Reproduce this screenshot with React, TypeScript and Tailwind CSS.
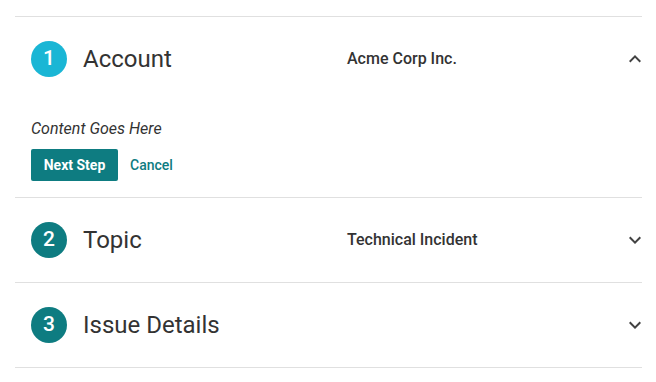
import React from "react";

const font = { fontFamily: "Roboto, 'Noto Sans', Arial, sans-serif" };

function Chevron({ up }: { up?: boolean }) {
  return (
    <svg width="24" height="24" viewBox="0 0 24 24" className="text-[#424242]">
      {up ? (
        <path fill="currentColor" d="M12 8l-6 6 1.41 1.41L12 10.83l4.59 4.58L18 14z" />
      ) : (
        <path fill="currentColor" d="M16.59 8.59L12 13.17 7.41 8.59 6 10l6 6 6-6z" />
      )}
    </svg>
  );
}

function Header({ n, title, value, active, up }: { n: number; title: string; value: string; active?: boolean; up?: boolean }) {
  return (
    <div className="flex h-[84px] items-center pl-4">
      <div
        className={`flex h-9 w-9 shrink-0 items-center justify-center rounded-full text-[21px] font-medium text-white ${
          active ? "bg-[#1ab6d5]" : "bg-[#0e7c81]"
        }`}
      >
        {n}
      </div>
      <div className="ml-4 w-[264px] text-[24px] text-[#333333]">{title}</div>
      <div className="flex-1 text-[16px] font-medium text-[#333333]">{value}</div>
      <div className="-mr-[5px] flex items-center">
        <Chevron up={up} />
      </div>
    </div>
  );
}

export default function App() {
  return (
    <div className="min-h-[382px] bg-white pt-4" style={font}>
      <div className="mx-[15px] w-[627px] border-t border-[#e0e0e0]">
        <div className="border-b border-[#e0e0e0]">
          <Header n={1} title="Account" value="Acme Corp Inc." active up />
          <div className="pb-4 pl-4 pt-[18px]">
            <div className="text-[16px] italic leading-5 text-[#333333]">Content Goes Here</div>
            <div className="mt-[10px] flex items-center">
              <button className="h-8 w-[87px] rounded-[2px] bg-[#0e7c81] text-[14px] font-bold text-white">
                Next Step
              </button>
              <button className="ml-3 text-[14px] font-medium text-[#0e7c81]">Cancel</button>
            </div>
          </div>
        </div>
        <div className="border-b border-[#e0e0e0]">
          <Header n={2} title="Topic" value="Technical Incident" />
        </div>
        <div className="border-b border-[#e0e0e0]">
          <Header n={3} title="Issue Details" value="" />
        </div>
      </div>
    </div>
  );
}
